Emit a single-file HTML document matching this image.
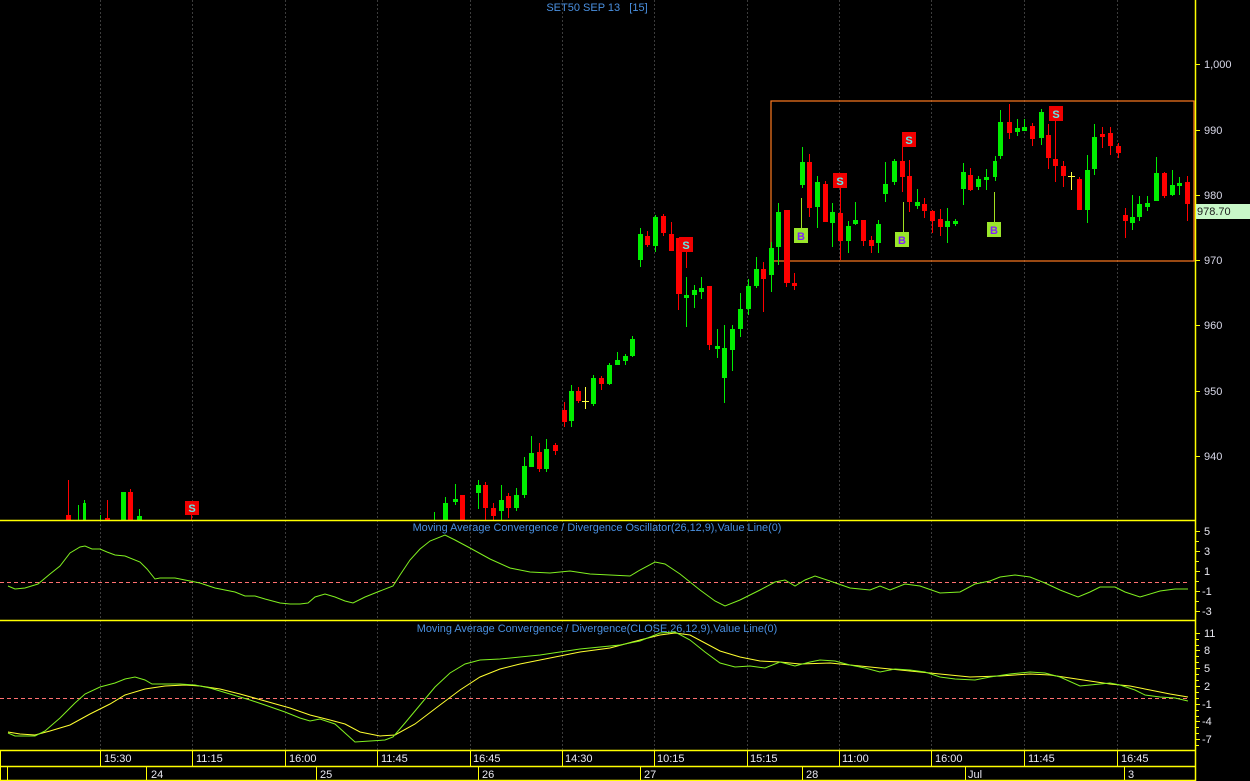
<!DOCTYPE html>
<html><head><meta charset="utf-8"><style>
html,body{margin:0;padding:0;background:#000;}
svg{display:block;font-family:"Liberation Sans",sans-serif;}
</style></head><body>
<svg width="1250" height="781" viewBox="0 0 1250 781" xmlns="http://www.w3.org/2000/svg">
<rect width="1250" height="781" fill="#000"/>
<g stroke="#3c3c3c" stroke-dasharray="2,2" stroke-width="1">
<path d="M100.5 0V750M192.5 0V750M285.5 0V750M377.5 0V750M470.5 0V750M562.5 0V750M654.5 0V750M747.5 0V750M839.5 0V750M931.5 0V750M1024.5 0V750M1117.5 0V750"/>
</g>
<text x="597" y="11" fill="#4a90e0" font-size="11" text-anchor="middle" xml:space="preserve">SET50 SEP 13   [15]</text>
<rect x="771" y="101" width="423" height="160" fill="none" stroke="#ff7a20" stroke-width="1.2"/>
<path stroke="#00ee00" stroke-width="1" fill="none" d="M445.5 497V520M455.5 484V505M478.5 480V509M501.5 485V520M516.5 488V511M524.5 457V498M531.5 436V467M546.5 439V472M571.5 385V427M593.5 375V406M609.5 363V385M617.5 352V365M625.5 354V365M632.5 336V357M640.5 228V267M655.5 215V252M686.5 277V327M694.5 285V308M701.5 277V299M717.5 329V358M724.5 325V403M732.5 325V371M740.5 293V337M748.5 279V315M756.5 257V288M771.5 242V292M778.5 203V265M802.5 147V188M817.5 176V228M832.5 203V247M848.5 221V253M855.5 202V225M878.5 220V253M885.5 162V202M894.5 159V185M917.5 189V209M947.5 208V243M955.5 219V226M963.5 163V205M978.5 176V190M986.5 169V190M995.5 156V181M1000.5 110V159M1017.5 119V136M1024.5 119V131M1041.5 109V145M1087.5 155V223M1094.5 124V175M1132.5 195V230M1139.5 196V221M1147.5 196V211M1156.5 157V201M1172.5 170V196M1179.5 177V195M78.5 505V520M84.5 500V520M100.5 515V520M123.5 492V520M139.5 509V520M434.5 512V520"/>
<path fill="#00ee00" d="M443 503h5v17h-5zM453 499h5v3h-5zM476 485h5v8h-5zM499 500h5v11h-5zM514 495h5v13h-5zM522 466h5v29h-5zM529 453h5v14h-5zM544 449h5v20h-5zM569 391h5v30h-5zM591 378h5v26h-5zM607 365h5v19h-5zM615 360h5v5h-5zM623 356h5v5h-5zM630 339h5v17h-5zM638 234h5v26h-5zM653 217h5v29h-5zM684 295h5v3h-5zM692 290h5v5h-5zM699 288h5v4h-5zM715 346h5v3h-5zM722 348h5v30h-5zM730 329h5v21h-5zM738 309h5v20h-5zM746 286h5v23h-5zM754 269h5v17h-5zM769 248h5v27h-5zM776 212h5v35h-5zM800 162h5v23h-5zM815 182h5v25h-5zM830 212h5v11h-5zM846 226h5v15h-5zM853 220h5v4h-5zM876 224h5v19h-5zM883 184h5v10h-5zM892 161h5v21h-5zM915 202h5v4h-5zM945 221h5v6h-5zM953 221h5v3h-5zM961 172h5v17h-5zM976 179h5v8h-5zM984 177h5v3h-5zM993 161h4v16h-4zM998 122h5v34h-5zM1015 128h5v4h-5zM1022 127h5v4h-5zM1039 112h5v26h-5zM1085 170h5v40h-5zM1092 137h5v32h-5zM1130 217h5v6h-5zM1137 204h5v13h-5zM1145 203h5v4h-5zM1154 173h5v28h-5zM1170 185h5v10h-5zM1177 183h5v3h-5zM83 503h3v17h-3zM121 492h5v28h-5zM137 516h5v4h-5z"/>
<path stroke="#ff0000" stroke-width="1" fill="none" d="M462.5 495V520M485.5 482V520M493.5 503V520M508.5 493V518M539.5 443V472M555.5 443V455M564.5 402V427M578.5 387V403M601.5 376V390M647.5 231V247M663.5 214V236M671.5 222V251M678.5 238V310M709.5 286V350M763.5 262V312M786.5 210V287M794.5 273V290M809.5 154V217M825.5 181V222M840.5 188V260M863.5 220V246M871.5 236V253M902.5 147V192M909.5 160V212M924.5 198V218M932.5 210V233M940.5 209V236M970.5 168V191M1009.5 104V139M1032.5 123V146M1048.5 124V169M1055.5 121V182M1063.5 161V187M1079.5 177V210M1102.5 127V148M1110.5 127V155M1118.5 143V158M1125.5 208V238M1164.5 172V198M1187.5 176V221M68.5 480V520M107.5 500V520M130.5 489V520M686.5 252V268M191.5 515V520"/>
<path fill="#ff0000" d="M460 495h5v25h-5zM483 485h5v23h-5zM491 508h5v8h-5zM506 496h5v12h-5zM537 452h5v17h-5zM553 445h5v6h-5zM562 410h5v12h-5zM576 391h5v10h-5zM599 378h5v6h-5zM645 236h5v9h-5zM661 216h5v17h-5zM669 234h5v17h-5zM676 238h6v56h-6zM707 286h5v59h-5zM761 269h5v10h-5zM784 210h6v73h-6zM792 283h5v3h-5zM807 162h5v46h-5zM823 184h5v38h-5zM838 213h5v28h-5zM861 220h5v21h-5zM869 240h5v6h-5zM900 161h5v16h-5zM907 176h5v26h-5zM922 204h5v7h-5zM930 211h5v10h-5zM938 219h5v8h-5zM968 175h5v15h-5zM1007 122h5v11h-5zM1030 126h5v13h-5zM1046 135h5v23h-5zM1053 159h5v7h-5zM1061 166h5v10h-5zM1077 179h5v31h-5zM1100 134h5v3h-5zM1108 133h5v13h-5zM1116 146h5v7h-5zM1123 215h5v6h-5zM1162 173h5v23h-5zM1185 182h5v22h-5zM66 515h5v5h-5zM105 518h5v2h-5zM128 492h5v28h-5z"/>
<path stroke="#ffff40" stroke-width="1" d="M585.5 387V409M582 401.5h7M1071.5 172V190M1068 176.5h7"/>
<g font-size="11" font-weight="bold" text-anchor="middle" fill="#60e8e8">
<rect x="185" y="501" width="14" height="14" fill="#f00000"/><text x="192" y="512">S</text>
<rect x="679" y="237" width="14" height="15" fill="#f00000"/><text x="686" y="249">S</text>
<rect x="833" y="173" width="14" height="15" fill="#f00000"/><text x="840" y="185">S</text>
<rect x="902" y="132" width="14" height="15" fill="#f00000"/><text x="909" y="144">S</text>
<rect x="1049" y="106" width="14" height="15" fill="#f00000"/><text x="1056" y="118">S</text>
</g>
<path stroke="#a0e020" d="M801.5 198V228M903.5 202V232M994.5 192V222"/>
<g font-size="11" font-weight="bold" text-anchor="middle" fill="#8020ff">
<rect x="794" y="228" width="14" height="15" fill="#9ae62a"/><text x="801" y="240">B</text>
<rect x="895" y="232" width="14" height="15" fill="#9ae62a"/><text x="902" y="244">B</text>
<rect x="987" y="222" width="14" height="15" fill="#9ae62a"/><text x="994" y="234">B</text>
</g>
<path stroke="#ffff00" stroke-width="1.5" d="M0 520.5H1195M0 620.5H1195M0 750.5H1195M0 766.5H1195M0 780.5H1195M1195.5 0V781"/>
<g fill="#d8d8e8" font-size="11">
<path stroke="#ffff00" d="M1195 64.5h5M1195 130.5h5M1195 195.5h5M1195 260.5h5M1195 325.5h5M1195 391.5h5M1195 456.5h5"/>
<text x="1204" y="68">1,000</text><text x="1204" y="134">990</text><text x="1204" y="199">980</text><text x="1204" y="264">970</text><text x="1204" y="329">960</text><text x="1204" y="395">950</text><text x="1204" y="460">940</text>
</g>
<rect x="1196" y="204" width="54" height="15" fill="#c8f8c8"/>
<text x="1197" y="215" font-size="11" fill="#202020">978.70</text>
<text x="597" y="531" fill="#4a90e0" font-size="10.9" text-anchor="middle">Moving Average Convergence / Divergence Oscillator(26,12,9),Value Line(0)</text>
<path stroke="#ff7070" stroke-dasharray="4,3" d="M0 582.5H1190"/>
<polyline fill="none" stroke="#80f020" stroke-width="1" points="8,586 15,589 25,588 38,584 50,574 60,566 70,553 80,547 85,546 92,549 100,549 107,552 115,555 125,556 140,562 147,569 155,579 160,578 175,578 185,580 200,583 215,588 235,592 245,596 255,596 265,599 280,603 290,604 300,604 308,603 315,597 325,594 335,597 345,601 353,603 365,597 380,591 393,586 400,575 410,560 420,549 430,541 445,535 455,540 470,548 490,559 510,568 530,572 550,573 570,571 590,574 610,575 630,576 640,570 655,562 665,564 680,574 700,590 715,601 725,606 740,600 760,590 775,582 785,580 795,586 805,580 815,576 830,581 850,588 870,590 880,586 890,590 905,584 920,586 940,593 960,592 975,584 990,581 1000,577 1015,575 1030,577 1045,583 1060,590 1078,597 1090,592 1100,587 1115,587 1125,592 1140,597 1160,591 1175,589 1188,589"/>
<g fill="#e8e8f0" font-size="11">
<path stroke="#ffff00" d="M1195 531.5h5M1195 541.5h4M1195 551.5h5M1195 561.5h4M1195 571.5h5M1195 581.5h4M1195 591.5h5M1195 601.5h4M1195 611.5h5"/>
<text x="1204" y="535">5</text><text x="1204" y="555">3</text><text x="1204" y="575">1</text><text x="1202" y="595">-1</text><text x="1202" y="615">-3</text>
</g>
<text x="597" y="632" fill="#4a90e0" font-size="10.9" text-anchor="middle">Moving Average Convergence / Divergence(CLOSE,26,12,9),Value Line(0)</text>
<path stroke="#ff7070" stroke-dasharray="4,3" d="M0 698.5H1190"/>
<polyline fill="none" stroke="#ffff30" stroke-width="1" points="8,732 20,734 35,735 50,731 70,725 90,714 110,704 125,695 145,689 165,686 185,685 200,686 220,689 240,694 265,701 290,708 310,715 330,720 345,724 360,732 380,736 395,735 415,724 440,705 460,690 480,677 500,669 520,664 540,660 560,656 580,652 610,648 640,640 660,635 675,633 690,635 705,643 720,651 740,657 760,661 780,662 800,664 830,663 850,665 880,668 910,671 940,674 970,677 1000,676 1030,674 1050,675 1070,678 1090,681 1110,684 1130,686 1150,690 1170,694 1188,697"/>
<polyline fill="none" stroke="#80f020" stroke-width="1" points="8,733 15,736 35,736 45,731 60,718 75,703 85,694 100,687 115,683 125,679 135,677 145,680 152,684 165,684 180,684 195,685 210,688 230,694 250,700 265,705 285,712 300,718 310,721 320,719 335,724 355,742 370,741 385,740 393,737 405,723 420,705 435,687 450,673 465,664 480,660 500,659 520,657 540,655 560,652 580,649 600,647 620,645 640,641 660,633 675,632 690,640 705,652 720,663 735,667 750,666 765,668 780,662 795,666 810,662 820,660 835,661 850,665 865,668 880,672 895,669 910,670 925,672 940,677 955,679 975,680 990,677 1010,674 1030,672 1045,673 1060,677 1080,686 1090,685 1110,683 1120,685 1135,690 1145,695 1160,697 1175,698 1188,701"/>
<g fill="#e8e8f0" font-size="11">
<path stroke="#ffff00" d="M1195 633.5h5M1195 639.5h4M1195 645.5h4M1195 650.5h5M1195 656.5h4M1195 662.5h4M1195 668.5h5M1195 674.5h4M1195 680.5h4M1195 686.5h5M1195 692.5h4M1195 698.5h4M1195 704.5h5M1195 710.5h4M1195 716.5h4M1195 721.5h5M1195 727.5h4M1195 733.5h4M1195 739.5h5M1195 745.5h4"/>
<text x="1204" y="637">11</text><text x="1204" y="654">8</text><text x="1204" y="672">5</text><text x="1204" y="690">2</text><text x="1202" y="708">-1</text><text x="1202" y="725">-4</text><text x="1202" y="743">-7</text>
</g>
<path stroke="#ffff00" stroke-width="1" d="M0.5 750V781M100.5 750V766M192.5 750V766M285.5 750V766M377.5 750V766M470.5 750V766M562.5 750V766M654.5 750V766M747.5 750V766M839.5 750V766M931.5 750V766M1024.5 750V766M1117.5 750V766M7.5 766V781M146.5 766V781M316.5 766V781M478.5 766V781M640.5 766V781M802.5 766V781M965.5 766V781M1124.5 766V781"/>
<g fill="#e8e8f0" font-size="11">
<text x="104" y="762">15:30</text><text x="196" y="762">11:15</text><text x="289" y="762">16:00</text><text x="381" y="762">11:45</text><text x="473" y="762">16:45</text><text x="565" y="762">14:30</text><text x="657" y="762">10:15</text><text x="750" y="762">15:15</text><text x="842" y="762">11:00</text><text x="935" y="762">16:00</text><text x="1028" y="762">11:45</text><text x="1121" y="762">16:45</text>
<text x="151" y="778">24</text><text x="320" y="778">25</text><text x="482" y="778">26</text><text x="644" y="778">27</text><text x="806" y="778">28</text><text x="968" y="778">Jul</text><text x="1128" y="778">3</text>
</g>
</svg>
</body></html>
